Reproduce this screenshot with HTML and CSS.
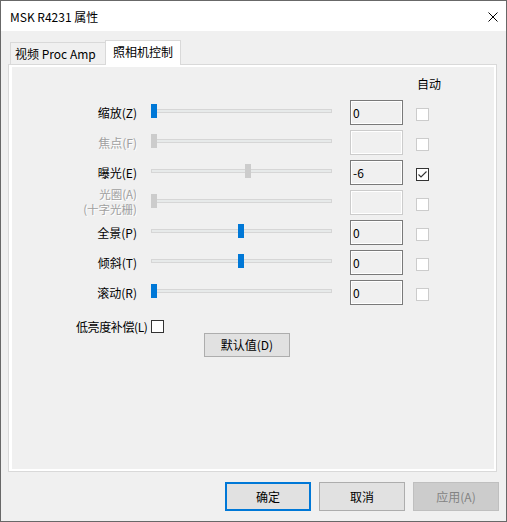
FILE: index.html
```html
<!DOCTYPE html>
<html>
<head>
<meta charset="utf-8">
<link rel="stylesheet" href="styles.css">
</head>
<body>
<div class="window">
  <div class="titlebar">
    <span class="title">MSK R4231 属性</span>
    <svg class="close" width="10" height="10" viewBox="0 0 10 10"><path d="M0.5 0.5L9.5 9.5M9.5 0.5L0.5 9.5" stroke="#000" stroke-width="1" fill="none"/></svg>
  </div>
  <div class="tabs">
    <div class="tab">视频 Proc Amp</div>
    <div class="tab active">照相机控制</div>
  </div>
  <div class="panel">
    <div class="auto-head">自动</div>
    <div class="rows">
      <div class="row">
        <div class="label">缩放(Z)</div>
        <div class="slider"><div class="track"></div><div class="thumb" style="left:0px"></div></div>
        <div class="edit">0</div>
        <div class="check"></div>
      </div>
      <div class="row">
        <div class="label off">焦点(F)</div>
        <div class="slider"><div class="track"></div><div class="thumb off" style="left:0px"></div></div>
        <div class="edit off"></div>
        <div class="check"></div>
      </div>
      <div class="row">
        <div class="label">曝光(E)</div>
        <div class="slider"><div class="track"></div><div class="thumb off" style="left:94px"></div></div>
        <div class="edit">-6</div>
        <div class="check on"><svg width="11" height="11" viewBox="0 0 11 11"><path d="M1.5 5.5L4 8L9.5 2.5" stroke="#333" stroke-width="1.1" fill="none"/></svg></div>
      </div>
      <div class="row">
        <div class="label off two"><span>光圈(A)</span><span>(十字光栅)</span></div>
        <div class="slider"><div class="track"></div><div class="thumb off" style="left:0px"></div></div>
        <div class="edit off"></div>
        <div class="check"></div>
      </div>
      <div class="row">
        <div class="label">全景(P)</div>
        <div class="slider"><div class="track"></div><div class="thumb" style="left:87px"></div></div>
        <div class="edit">0</div>
        <div class="check"></div>
      </div>
      <div class="row">
        <div class="label">倾斜(T)</div>
        <div class="slider"><div class="track"></div><div class="thumb" style="left:87px"></div></div>
        <div class="edit">0</div>
        <div class="check"></div>
      </div>
      <div class="row">
        <div class="label">滚动(R)</div>
        <div class="slider"><div class="track"></div><div class="thumb" style="left:0px"></div></div>
        <div class="edit">0</div>
        <div class="check"></div>
      </div>
    </div>
    <div class="low">
      <span class="low-label">低亮度补偿(L)</span>
      <div class="check dark"></div>
    </div>
    <button class="btn def">默认值(D)</button>
  </div>
  <div class="buttons">
    <button class="btn primary">确定</button>
    <button class="btn">取消</button>
    <button class="btn disabled">应用(A)</button>
  </div>
</div>
</body>
</html>
```
FILE: styles.css
```css
html, body {
  margin: 0;
  padding: 0;
}
body {
  font-family: "Noto Sans CJK SC", "Noto Sans", sans-serif;
  font-size: 12px;
  color: #000;
  background: #fff;
}
.window {
  width: 507px;
  height: 522px;
  box-sizing: border-box;
  border: 1px solid #686868;
  background: #f0f0f0;
  display: flex;
  flex-direction: column;
}
.titlebar {
  height: 30px;
  flex: none;
  background: #fff;
  display: flex;
  align-items: center;
  justify-content: space-between;
  padding: 0 8px 0 9px;
}
.title {
  line-height: 16px;
  padding-top: 1px;
}
.close {
  display: block;
  margin-top: 1px;
}
.tabs {
  display: flex;
  align-items: flex-end;
  height: 24px;
  margin: 9px 0 0 9px;
  flex: none;
}
.tab {
  height: 22px;
  width: 95px;
  box-sizing: border-box;
  border: 1px solid #d9d9d9;
  border-bottom: none;
  border-right: none;
  padding-left: 4px;
  line-height: 21px;
  background: #f0f0f0;
  white-space: nowrap;
}
.tab.active {
  height: 25px;
  width: 76px;
  border-right: 1px solid #d9d9d9;
  background: #fff;
  padding-left: 7px;
  line-height: 22px;
  margin-bottom: -1px;
  position: relative;
  z-index: 1;
}
.panel {
  margin-left: 7px;
  width: 489px;
  height: 408px;
  flex: none;
  box-sizing: border-box;
  border: 1px solid #d9d9d9;
  box-shadow: inset 0 0 0 2px #fff, inset 3px 0 0 #fff;
  padding-top: 11px;
}
.auto-head {
  margin-left: 408px;
  height: 16px;
  line-height: 16px;
}
.rows {
  display: flex;
  flex-direction: column;
  gap: 5px;
  margin-top: 8px;
}
.row {
  display: flex;
  align-items: flex-start;
  height: 25px;
}
.label {
  width: 128px;
  height: 25px;
  flex: none;
  display: flex;
  flex-direction: column;
  justify-content: center;
  align-items: flex-end;
  line-height: 15px;
  padding-bottom: 1px;
  box-sizing: border-box;
  white-space: nowrap;
}
.label.two {
  line-height: 15px;
  font-size: 11.5px;
}
.label.off {
  color: #a0a0a0;
  text-shadow: 1px 1px 0 #fff;
}
.slider {
  width: 181px;
  height: 25px;
  flex: none;
  margin-left: 14px;
  position: relative;
}
.track {
  margin-top: 9px;
  height: 4px;
  box-sizing: border-box;
  border: 1px solid #d6d6d6;
  background: #e7eaea;
}
.thumb {
  position: absolute;
  top: 4px;
  width: 6px;
  height: 14px;
  background: #0078d7;
}
.thumb.off {
  background: #cccccc;
}
.edit {
  width: 53px;
  height: 25px;
  flex: none;
  margin-left: 18px;
  box-sizing: border-box;
  border: 1px solid #7a7a7a;
  box-shadow: inset 0 0 0 1px #fff;
  background: #f0f0f0;
  padding-left: 2px;
  line-height: 23px;
}
.edit.off {
  border-color: #cccccc;
}
.check {
  width: 13px;
  height: 13px;
  flex: none;
  box-sizing: border-box;
  border: 1px solid #cccccc;
  background: #fff;
  margin: 8px 0 0 13px;
}
.check svg {
  display: block;
}
.check.on {
  border-color: #333;
}
.low {
  display: flex;
  align-items: center;
  height: 13px;
  margin: 15px 0 0 67px;
}
.low-label {
  line-height: 13px;
  white-space: nowrap;
  letter-spacing: -0.4px;
}
.check.dark {
  border-color: #333;
  margin: 0 0 0 4px;
}
.btn {
  font-family: inherit;
  font-size: 12px;
  color: #000;
  width: 86px;
  box-sizing: border-box;
  border: 1px solid #adadad;
  background: #e1e1e1;
  padding: 0;
  margin: 0;
  text-align: center;
  display: block;
}
.btn.def {
  height: 24px;
  margin-left: 195px;
  line-height: 22px;
}
.buttons {
  display: flex;
  justify-content: flex-end;
  gap: 8px;
  margin: 10px 7px 0 0;
}
.buttons .btn {
  height: 29px;
  line-height: 27px;
}
.btn.primary {
  border: 2px solid #0078d7;
  line-height: 25px;
}
.btn.disabled {
  background: #cccccc;
  border-color: #bfbfbf;
  color: #838383;
}
```
